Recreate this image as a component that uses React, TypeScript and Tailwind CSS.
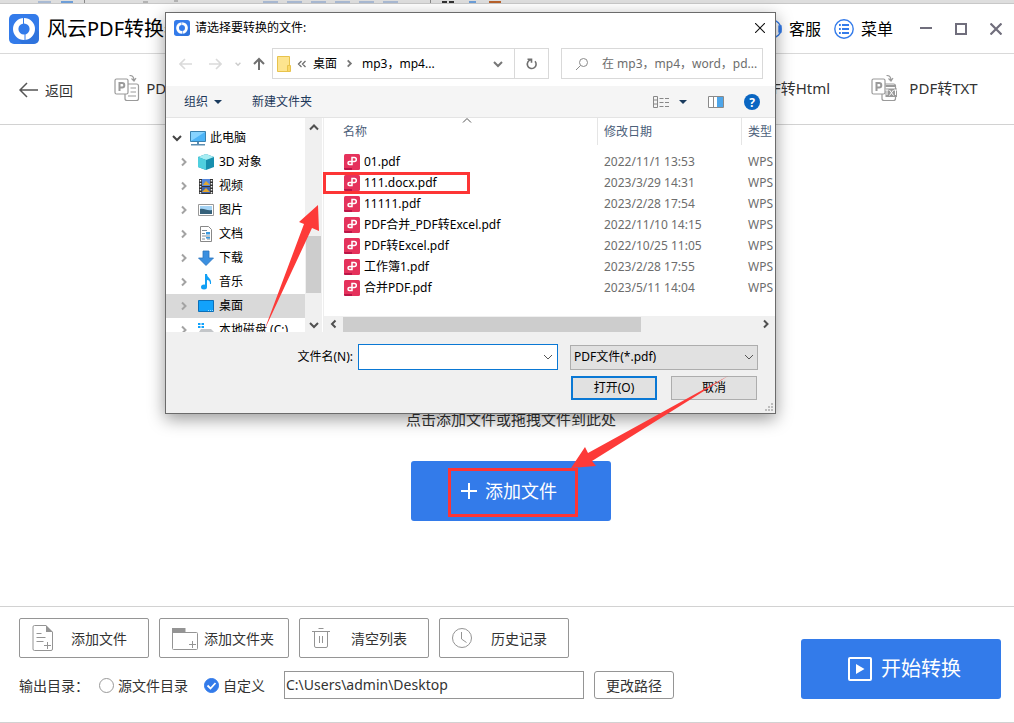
import { useState } from 'react';
import type { ReactNode } from 'react';

const FILES = [
  { name: '01.pdf', date: '2022/11/1 13:53' },
  { name: '111.docx.pdf', date: '2023/3/29 14:31' },
  { name: '11111.pdf', date: '2023/2/28 17:54' },
  { name: 'PDF合并_PDF转Excel.pdf', date: '2022/11/10 14:15' },
  { name: 'PDF转Excel.pdf', date: '2022/10/25 11:05' },
  { name: '工作簿1.pdf', date: '2023/2/28 17:55' },
  { name: '合并PDF.pdf', date: '2023/5/11 14:04' },
];

type Dir = 'up' | 'down' | 'left' | 'right';

const CHEVRONS: Record<Dir, string> = {
  up: 'M1 6.5 5 2.5 9 6.5',
  down: 'M1 3 5 7 9 3',
  left: 'M6.5 1.5 3 5 6.5 8.5',
  right: 'M3 1.5 6.5 5 3 8.5',
};

function Chevron({ dir, color = '#555', width = 2 }: { dir: Dir; color?: string; width?: number }) {
  return (
    <svg className="size-[10px] shrink-0" viewBox="0 0 10 10" fill="none" stroke={color} strokeWidth={width}>
      <path d={CHEVRONS[dir]} />
    </svg>
  );
}

function Logo({ className }: { className: string }) {
  return (
    <svg className={className} viewBox="0 0 30 30">
      <rect width="30" height="30" rx="5" fill="#337bea" />
      <path d="M10 26 24 22 26 14 30 18v7a5 5 0 0 1-5 5H13z" fill="#2563c6" opacity=".35" />
      <circle cx="15" cy="15" r="8.3" fill="none" stroke="#fff" strokeWidth="5.4" />
      <path d="M14.5 3v7M16 20v7" stroke="#337bea" strokeWidth="1" />
    </svg>
  );
}

function ConvertIcon({ txt }: { txt?: boolean }) {
  return (
    <svg className="h-[28px] w-[26px] shrink-0" viewBox="0 1 26 28" fill="none" stroke="#9a9a9a" strokeWidth="1.2">
      <path d="M14 10h8.5a2 2 0 0 1 2 2v12.500a2 2 0 0 1-2 2H13a2 2 0 0 1-2-2V20" />
      <rect x="1" y="5" width="13" height="15" rx="1.500" fill="#fff" />
      <path d="M5.500 17V9h2.600a2.200 2.200 0 0 1 0 4.400H5.500" strokeWidth="2" />
      <path d="M15.500 1.500c3 0 4.500 1.500 4.500 5M17.500 4.500l2.500 2.500 2-3" />
      {txt ? (
        <>
          <rect x="14.500" y="11" width="10.500" height="2" fill="#9a9a9a" stroke="none" />
          <rect x="14.500" y="14.500" width="11.500" height="8.500" fill="#9a9a9a" stroke="none" />
          <path d="M14.500 16h3M16 16v5M18.500 16l4 5.500M22.500 16l-4 5.500M23 16h3M24.500 16v5" stroke="#fff" strokeWidth="1" />
        </>
      ) : (
        <path d="M16.500 14H22M16.500 18H22M14 22h8" />
      )}
    </svg>
  );
}

function ConvertTab({ label, txt }: { label: string; txt?: boolean }) {
  return (
    <button type="button" className="flex w-[115px] items-center gap-[4px]">
      <ConvertIcon txt={txt} />
      <span className="flex-1 text-center text-[15px] whitespace-nowrap">{label}</span>
    </button>
  );
}

function TitleBar() {
  return (
    <header className="flex h-[50px] items-center border-b border-[#d9d9d9] pr-3 pl-[9px] text-black">
      <Logo className="size-[30px]" />
      <h1 className="ml-2 text-[20px]">风云PDF转换器</h1>
      <button type="button" className="ml-auto flex items-center gap-[7px] text-[16px]">
        <svg className="size-5" viewBox="0 0 20 20" fill="none" stroke="#337bea" strokeWidth="1.400">
          <circle cx="10" cy="10" r="9" />
          <rect x="17" y="7" width="2" height="6" fill="#337bea" />
        </svg>
        客服
      </button>
      <button type="button" className="ml-[13px] flex items-center gap-[7px] text-[16px]">
        <svg className="size-5" viewBox="0 0 20 20" fill="none" stroke="#337bea">
          <circle cx="10" cy="10" r="9.200" strokeWidth="1.400" />
          <path d="M8 6h7M8 10h7M8 14h7M5 6h1.800M5 10h1.800M5 14h1.800" strokeWidth="2" />
        </svg>
        菜单
      </button>
      <div className="ml-[27px] flex gap-[23px]">
        <button type="button" aria-label="最小化">
          <svg className="size-3" viewBox="0 0 12 12" stroke="#706e7c" strokeWidth="2"><path d="M0 5h12" /></svg>
        </button>
        <button type="button" aria-label="最大化">
          <svg className="size-3" viewBox="0 0 12 12" fill="none" stroke="#706e7c" strokeWidth="2">
            <rect x="1" y="1" width="10" height="10" />
          </svg>
        </button>
        <button type="button" aria-label="关闭">
          <svg className="size-3" viewBox="0 0 12 12" stroke="#706e7c" strokeWidth="2.200">
            <path d="M.5.500l11 11M11.500.500l-11 11" />
          </svg>
        </button>
      </div>
    </header>
  );
}

/** Slice of the window that lies behind, visible along the top edge. */
function BackdropStrip() {
  return (
    <div className="h-1 overflow-hidden border-b border-[#c8c8c8] bg-[#dedede]">
      <svg className="h-[3px] w-[1014px]" viewBox="0 0 1014 3">
        <path d="M38 2h13M263 2h15M287 2h15M311 2h15M335 2h15M359 2h15M383 2h15" stroke="#a9bad3" strokeWidth="2" />
        <path d="M61 2h12M469 2h7" stroke="#6d9ed8" strokeWidth="2" />
        <path d="M84.500 0v3M143 2h5M174 1h4M430.500 0v3" stroke="#888" />
        <path d="M442 2h5M449 2h5" stroke="#333" strokeWidth="2" />
        <path d="M489 2h12" stroke="#b8622c" strokeWidth="2" />
      </svg>
    </div>
  );
}

function FooterButton({ icon, label }: { icon: ReactNode; label: string }) {
  return (
    <button
      type="button"
      className="flex h-10 w-[130px] items-center rounded-[2px] border border-[#959595] pr-[10px] pl-3 text-[14px]"
    >
      <svg className="size-7 shrink-0" viewBox="0 0 28 28" fill="none" stroke="#949494">{icon}</svg>
      <span className="flex-1 text-center whitespace-nowrap">{label}</span>
    </button>
  );
}

function TargetRadio({ label, checked, onChange }: { label: string; checked: boolean; onChange: () => void }) {
  return (
    <label className="flex items-center gap-1">
      <span className="grid size-[15px] place-items-center">
        <input
          type="radio"
          name="target"
          checked={checked}
          onChange={onChange}
          className="col-start-1 row-start-1 size-[15px] appearance-none rounded-full border border-[#999] checked:border-[#337bea] checked:bg-[#337bea]"
        />
        {checked && (
          <svg className="pointer-events-none col-start-1 row-start-1 size-[11px]" viewBox="0 0 11 11" fill="none" stroke="#fff" strokeWidth="1.800">
            <path d="M1.500 5.500 4.500 8.500 9.500 3" />
          </svg>
        )}
      </span>
      {label}
    </label>
  );
}

function Footer() {
  const [target, setTarget] = useState<'source' | 'custom'>('custom');
  return (
    <footer className="flex items-end justify-between border-y border-[#d2d2d2] pt-[11px] pr-[13px] pb-[23px] pl-[19px]">
      <div className="flex flex-col gap-[13px]">
        <div className="flex gap-[10px]">
          <FooterButton
            label="添加文件"
            icon={
              <>
                <path d="M14 1.500H2.500a1.500 1.500 0 0 0-1.500 1.500v22a1.500 1.500 0 0 0 1.500 1.500h16.500a1.500 1.500 0 0 0 1.500-1.500V8M4.500 9.500h5M4.500 13.500h9M4.500 17.500h7M12 21.500h7M15.500 18v7" />
                <path d="M14 1v7h7z" fill="#949494" stroke="none" />
              </>
            }
          />
          <FooterButton
            label="添加文件夹"
            icon={
              <>
                <path d="M.5 8.500h24a1 1 0 0 1 1 1v15a1 1 0 0 1-1 1h-23a1 1 0 0 1-1-1zM17 20.500h7M20.500 17v7" />
                <path d="M0 4h13.500v5H0z" fill="#949494" stroke="none" />
              </>
            }
          />
          <FooterButton
            label="清空列表"
            icon={<path d="M0 7.500h18M6.500 4.500h5M2.500 7.500v14.500a1.500 1.500 0 0 0 1.500 1.500h10a1.500 1.500 0 0 0 1.500-1.500V7.500M7.500 12v7M10.500 12v7" />}
          />
          <FooterButton
            label="历史记录"
            icon={
              <>
                <circle cx="10" cy="14" r="9.500" />
                <path d="M9.500 8V15l5 3.500" />
              </>
            }
          />
        </div>
        <div className="flex items-center text-[14px]">
          <span className="w-20">输出目录：</span>
          <div className="flex w-[185px] gap-4">
            <TargetRadio label="源文件目录" checked={target === 'source'} onChange={() => setTarget('source')} />
            <TargetRadio label="自定义" checked={target === 'custom'} onChange={() => setTarget('custom')} />
          </div>
          <input
            aria-label="输出目录"
            defaultValue="C:\Users\admin\Desktop"
            className="h-7 w-[300px] border border-[#959595] px-px pb-[2px]"
          />
          <button type="button" className="ml-[10px] h-7 w-20 rounded-[3px] border border-[#959595]">更改路径</button>
        </div>
      </div>
      <button
        type="button"
        className="flex h-[60px] w-[200px] items-center justify-center gap-[9px] rounded-[3px] bg-[#337bea] pl-[7px] text-[20px] text-white"
      >
        <svg className="size-6" viewBox="0 0 24 24">
          <rect x="1" y="1" width="22" height="22" rx="1" fill="none" stroke="#fff" strokeWidth="2" />
          <path d="M8 7v10l8.500-5z" fill="#fff" />
        </svg>
        开始转换
      </button>
    </footer>
  );
}

const TREE: { label: string; icon: ReactNode }[] = [
  {
    label: '3D 对象',
    icon: (
      <>
        <path d="M8 0l8 3v10l-8 3-8-3V3z" fill="#178fae" />
        <path d="M8 0l8 3-8 3-8-3z" fill="#a7edf3" />
        <path d="M0 3l8 3v10l-8-3z" fill="#4fd0df" />
      </>
    ),
  },
  {
    label: '视频',
    icon: (
      <>
        <path d="M1 1h14v15H1z" fill="#333" />
        <path d="M4 1h8v7H4z" fill="#5588dd" />
        <path d="M4 9h8v6H4z" fill="#3d63b0" />
        <path d="M5 7l3-4 4 4zM4 14l4-4 4 4z" fill="#e2a72e" />
        <path d="M2.500 2v14M13.500 2v14" stroke="#eee" strokeWidth="1.500" strokeDasharray="1.500 1.500" />
      </>
    ),
  },
  {
    label: '图片',
    icon: (
      <>
        <path d="M.5 2.500h15v11H.5z" fill="#fff" stroke="#999" />
        <path d="M2 4h12v5H2z" fill="#a5d4f5" />
        <path d="M2 7c4-1 7 2 12 1v4H2z" fill="#35617a" />
      </>
    ),
  },
  {
    label: '文档',
    icon: (
      <>
        <path d="M2.500.500h8l3 3v12h-11z" fill="#fff" stroke="#888" />
        <path d="M4 4.500h5M4 7.500h3M4 10h8M4 13h3M9 13h3" stroke="#7c8c99" />
        <path d="M8 6h4v2.500H8zM8 11h4v1.500H8z" fill="#3b9ae0" />
      </>
    ),
  },
  { label: '下载', icon: <path d="M5 1h6v7h4.500L8 15.500.5 8H5z" fill="#3a8fe0" stroke="#2874bf" strokeWidth=".8" /> },
  {
    label: '音乐',
    icon: (
      <>
        <path d="M7 0h2c0 4 5 4 4 10h-1c0-3-1-4-3-4v7H7z" fill="#12a0f5" />
        <ellipse cx="6" cy="13" rx="3" ry="2.500" fill="#12a0f5" />
      </>
    ),
  },
  {
    label: '桌面',
    icon: (
      <>
        <path d="M.5 2.500h15v11H.5z" fill="#12a2fb" stroke="#0b6fb8" />
        <path d="M10 12.500h5" stroke="#9bdcff" strokeDasharray="1 1" />
      </>
    ),
  },
  {
    label: '本地磁盘 (C:)',
    icon: (
      <>
        <path d="M0 1h2.500v2H0zM3.500 1H6v2H3.500zM0 4h2.500v2H0zM3.500 4H6v2H3.500z" fill="#12a2fb" />
        <path d="M3 7h10l3 3v2H1v-2z" fill="#c3c6c9" />
        <path d="M1 10h15v3H1z" fill="#85898c" />
      </>
    ),
  },
];

function FolderTree() {
  return (
    <div className="flex w-[158px] shrink-0">
      <ul className="min-w-0 flex-1 overflow-hidden pt-2 whitespace-nowrap">
        <li className="flex h-6 items-center pl-[6px]">
          <Chevron dir="down" color="#444" />
          <svg className="mr-1 ml-2 size-4" viewBox="0 0 16 16">
            <path d="M.5 1.500h15v10H.5z" fill="#4db4f7" stroke="#3a81ae" />
            <path d="M1 11V2h14z" fill="#86d3ff" />
            <path d="M7 12h2v2H7zM1 14h14v1.500H1z" fill="#5b8db1" />
          </svg>
          此电脑
        </li>
        {TREE.map((item) => (
          <li
            key={item.label}
            className={`flex h-6 items-center pl-[13px] ${item.label === '桌面' ? 'bg-[#d9d9d9]' : ''}`}
          >
            <Chevron dir="right" color="#a3a3a3" />
            <svg className="mr-[5px] ml-[9px] size-4 shrink-0" viewBox="0 0 16 16">{item.icon}</svg>
            {item.label}
          </li>
        ))}
      </ul>
      <div className="flex w-[17px] flex-col items-center bg-[#f0f0f0] pt-[5px] pb-[2px]">
        <Chevron dir="up" color="#505050" />
        <div className="mt-auto mb-[27px] h-[57px] w-[15px] bg-[#cdcdcd]" />
        <Chevron dir="down" color="#505050" />
      </div>
      <div className="w-[2px] border-r border-[#eee] bg-white" />
    </div>
  );
}

function FileList() {
  return (
    <div className="flex min-w-0 flex-1 flex-col">
      <div className="relative flex-1 overflow-hidden">
        <table className="w-full table-fixed border-separate border-spacing-0 text-left whitespace-nowrap">
          <colgroup>
            <col className="w-[273px]" />
            <col className="w-[144px]" />
            <col />
          </colgroup>
          <thead className="text-[#4c607a]">
            <tr>
              <th className="h-[27px] p-0 pl-[19px] font-normal">名称</th>
              <th className="border-l border-[#e5e5e5] p-0 pl-[6px] font-normal">修改日期</th>
              <th className="border-l border-[#e5e5e5] p-0 pl-[6px] font-normal">类型</th>
            </tr>
          </thead>
          <tbody className="text-[#6d6d6d] before:block before:h-[6px] before:content-['']">
            {FILES.map((f) => (
              <tr key={f.name}>
                <td className="h-[21px] p-0 pl-[20px] text-black">
                  <div className="flex items-center gap-1">
                    <svg className="size-4" viewBox="0 0 16 16">
                      <rect width="16" height="16" rx="1.500" fill="#e5325c" />
                      <path d="M0 14h8v2H1.500A1.500 1.500 0 0 1 0 14.500z" fill="#bb1547" />
                      <path d="M8 10.500V3.500h2.300a2 2 0 0 1 0 4H5.500a1.500 1.500 0 0 0 0 3z" fill="none" stroke="#fff" strokeWidth="1.500" />
                    </svg>
                    {f.name}
                  </div>
                </td>
                <td className="p-0 pl-[7px]">{f.date}</td>
                <td className="overflow-hidden p-0 pl-[7px]">WPS</td>
              </tr>
            ))}
          </tbody>
        </table>
        <div className="absolute top-[-2px] left-[138px]">
          <Chevron dir="up" width={1} />
        </div>
      </div>
      <div className="flex h-4 items-center bg-[#f0f0f0] pr-1 pl-[5px]">
        <Chevron dir="left" color="#505050" />
        <div className="ml-1 h-[15px] w-[298px] bg-[#cdcdcd]" />
        <span className="ml-auto flex"><Chevron dir="right" color="#505050" /></span>
      </div>
    </div>
  );
}

function AddressRow() {
  return (
    <div className="flex h-[31px] items-center pr-3 pl-[13px]">
      <div className="flex w-[93px] items-center">
        <button type="button" aria-label="后退">
          <svg className="h-3 w-[13px]" viewBox="0 0 13 12" fill="none" stroke="#dadada" strokeWidth="1.600"><path d="M13 6H1M6 1 1 6l5 5" /></svg>
        </button>
        <button type="button" aria-label="前进" className="ml-[17px]">
          <svg className="h-3 w-[13px]" viewBox="0 0 13 12" fill="none" stroke="#dadada" strokeWidth="1.600"><path d="M0 6h12M7 1l5 5-5 5" /></svg>
        </button>
        <svg className="ml-[13px] size-[6px]" viewBox="0 0 10 10" fill="none" stroke="#ccc" strokeWidth="2.400"><path d={CHEVRONS.down} /></svg>
        <button type="button" aria-label="上移" className="ml-[12px]">
          <svg className="h-[13px] w-3" viewBox="0 0 12 13" fill="none" stroke="#707070" strokeWidth="2"><path d="M6 13V2M1 7l5-5 5 5" /></svg>
        </button>
      </div>
      <div className="flex h-full w-[277px] items-center border border-[#d9d9d9] pl-1">
        <svg className="h-4 w-[14px]" viewBox="0 0 14 16">
          <path d="M.5.500h12v15H.5z" fill="#fde48f" stroke="#e8c34c" />
          <path d="M10.500 9.500h3v6h-3z" fill="#fbd867" stroke="#e8c34c" />
        </svg>
        <svg className="mx-[6px] h-[8px] w-[10px]" viewBox="0 0 10 8" fill="none" stroke="#707070" strokeWidth="1.300"><path d="M4.500 1 1.500 4l3 3M8.500 1l-3 3 3 3" /></svg>
        <span>桌面</span>
        <svg className="mx-[8px] size-[9px]" viewBox="0 0 10 10" fill="none" stroke="#777" strokeWidth="2"><path d={CHEVRONS.right} /></svg>
        <span>mp3，mp4...</span>
        <span className="mr-[11px] ml-auto flex"><Chevron dir="down" color="#777" /></span>
        <button type="button" aria-label="刷新" className="grid h-full w-[34px] place-items-center border-l border-[#d9d9d9]">
          <svg className="size-3" viewBox="0 0 12 12" fill="none" stroke="#707070" strokeWidth="1.600">
            <path d="M1.500 1.200h4v3.500M5 1.800A4.400 4.400 0 1 0 9 3.200" />
          </svg>
        </button>
      </div>
      <div className="ml-3 flex h-full min-w-0 flex-1 items-center border border-[#d9d9d9] pl-[14px]">
        <svg className="size-3 shrink-0" viewBox="0 0 12 12" fill="none" stroke="#8a8a8a">
          <circle cx="7.500" cy="4.500" r="4" />
          <path d="M4.500 7.500 0 12" />
        </svg>
        <input
          type="text"
          aria-label="搜索"
          placeholder="在 mp3，mp4，word，pd..."
          className="ml-[14px] w-full min-w-0 outline-none placeholder:text-[#6d6d6d]"
        />
      </div>
    </div>
  );
}

function Caret() {
  return <svg className="h-1 w-2" viewBox="0 0 8 4" fill="#1a3b5e"><path d="M0 0h8L4 4z" /></svg>;
}

function FileDialog() {
  return (
    <div
      role="dialog"
      aria-label="请选择要转换的文件"
      className="absolute top-[12px] left-[165px] w-[611px] border border-[#6b6b6b] bg-white text-[12px] text-black shadow-[0_5px_16px_rgba(0,0,0,0.4)]"
    >
      <div className="mb-[6px] flex h-[29px] items-center pr-[10px] pl-2">
        <Logo className="size-4" />
        <span className="ml-[5px]">请选择要转换的文件:</span>
        <button type="button" aria-label="关闭" className="ml-auto">
          <svg className="size-[10px]" viewBox="0 0 10 10" stroke="#111" strokeWidth="1.100"><path d="M0 0l10 10M10 0 0 10" /></svg>
        </button>
      </div>
      <AddressRow />
      <div className="mt-[7px] flex h-8 items-center border-b border-[#e4e4e4] bg-[#f5f5f5] pr-[15px] pl-[18px] text-[#1e395b]">
        <button type="button" className="flex items-center gap-[6px]">组织 <Caret /></button>
        <button type="button" className="ml-[30px]">新建文件夹</button>
        <button type="button" aria-label="视图" className="ml-auto flex items-center gap-[10px]">
          <svg className="h-3 w-4" viewBox="0 0 16 12" fill="none" stroke="#888">
            <path d="M.5.500h4v11h-4zM.5 4h4M.5 8h4M6.500 2.500h4M12 2.500h4M6.500 6.500h4M12 6.500h4M6.500 10.500h4M12 10.500h4" />
          </svg>
          <Caret />
        </button>
        <button type="button" aria-label="预览窗格" className="ml-[21px]">
          <svg className="h-3 w-4" viewBox="0 0 16 12" fill="#fff" stroke="#8a8a8a">
            <path d="M.5.500h15v11H.5zM5.500 1v10" />
            <path d="M9 1h6v10H9z" fill="#4ea6ea" stroke="none" />
          </svg>
        </button>
        <button
          type="button"
          aria-label="帮助"
          className="ml-5 grid size-4 place-items-center rounded-full bg-[#0a66c2] text-[12px] font-bold text-white"
        >
          ?
        </button>
      </div>
      <div className="flex h-[214px]">
        <FolderTree />
        <FileList />
      </div>
      <div className="bg-[#f0f0f0] pt-[12px] pr-[17px] pb-[13px]">
        <div className="flex items-center justify-end">
          <label htmlFor="file-name" className="mr-[5px]">文件名(N):</label>
          <div className="flex h-[26px] w-[200px] items-center border border-[#0a78d4] bg-white pr-1">
            <input id="file-name" type="text" className="min-w-0 flex-1 px-1 outline-none" />
            <Chevron dir="down" width={1} />
          </div>
          <div className="ml-3 grid w-[188px] items-center">
            <select
              aria-label="文件类型"
              className="col-start-1 row-start-1 h-[25px] w-full appearance-none border border-[#adadad] bg-[#e1e1e1] px-[3px]"
            >
              <option>PDF文件(*.pdf)</option>
            </select>
            <span className="pointer-events-none col-start-1 row-start-1 mr-1 justify-self-end">
              <Chevron dir="down" width={1} />
            </span>
          </div>
        </div>
        <div className="mt-[6px] flex justify-end gap-[14px] pr-px">
          <button type="button" className="h-6 w-[86px] border-2 border-[#0a78d4] bg-[#e1e1e1]">打开(O)</button>
          <button type="button" className="h-6 w-[86px] border border-[#adadad] bg-[#e1e1e1]">取消</button>
        </div>
      </div>
      <svg className="absolute right-[2px] bottom-[2px] size-[8px]" viewBox="0 0 8 8" fill="#bdbdbd">
        <path d="M6 0h2v2H6zM3 3h2v2H3zM6 3h2v2H6zM0 6h2v2H0zM3 6h2v2H3zM6 6h2v2H6z" />
      </svg>
    </div>
  );
}

/** Red frames and arrows that point at the two steps. */
function Annotations() {
  return (
    <svg className="pointer-events-none absolute top-0 left-0 h-[723px] w-[1014px]" viewBox="0 0 1014 723">
      <g fill="none" stroke="#fd3535" strokeWidth="3">
        <rect x="324.500" y="173.500" width="144" height="19" />
        <rect x="449.500" y="469.500" width="127" height="46" />
      </g>
      <g fill="#fd3a38">
        <path d="M318 205 299 222 304 224 264 331 312 228 319 231z" />
        <path d="M571 468 585 447 588 453 728 376 592 461 596 466z" />
      </g>
    </svg>
  );
}

export default function App() {
  return (
    <div className="relative flex min-h-screen flex-col overflow-hidden bg-white font-['Noto_Sans','Noto_Sans_CJK_SC',sans-serif] text-[#333]">
      <BackdropStrip />
      <TitleBar />
      <nav className="flex h-[71px] items-center border-b border-[#d2d2d2] pr-7 pb-px pl-[19px]">
        <button type="button" className="flex items-center gap-[7px] pt-[3px] text-[14px]">
          <svg className="h-4 w-[19px]" viewBox="0 0 19 16" fill="none" stroke="#555" strokeWidth="1.500"><path d="M19 8H1M8 1 1 8l7 7" /></svg>
          返回
        </button>
        <div className="ml-[41px] flex flex-1 justify-between">
          <ConvertTab label="PDF转Word" />
          <div className="flex gap-[37px]">
            <ConvertTab label="PDF转Html" />
            <ConvertTab label="PDF转TXT" txt />
          </div>
        </div>
      </nav>
      <main className="flex flex-1 flex-col items-center justify-end pb-[85px] pl-2">
        <p className="mb-[31px] text-[15px]">点击添加文件或拖拽文件到此处</p>
        <button
          type="button"
          className="flex h-[60px] w-[200px] items-center justify-center gap-2 rounded-[3px] bg-[#337bea] pr-[4px] text-[18px] text-white"
        >
          <svg className="size-4" viewBox="0 0 16 16" stroke="#fff" strokeWidth="2"><path d="M0 8h16M8 0v16" /></svg>
          添加文件
        </button>
      </main>
      <Footer />
      <FileDialog />
      <Annotations />
    </div>
  );
}
